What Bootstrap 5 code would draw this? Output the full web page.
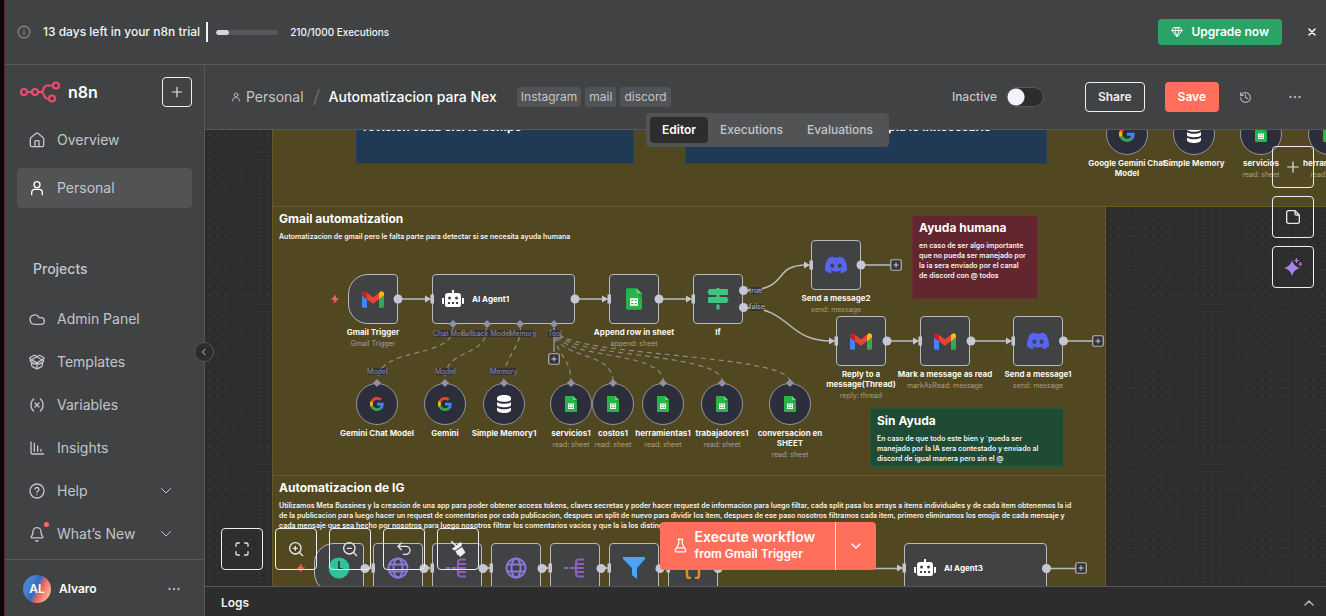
<!DOCTYPE html>
<html lang="en" data-bs-theme="dark">
<head>
<meta charset="utf-8">
<meta name="viewport" content="width=device-width, initial-scale=1">
<title>Automatizacion para Nex - n8n</title>
<link href="https://cdn.jsdelivr.net/npm/bootstrap@5.3.0/dist/css/bootstrap.min.css" rel="stylesheet">
<style>
:root{--panel:#414243;--raised:#525355;--deep:#2d2d2d;--line:#57585a;--muted:#c3c5cc;--bright:#f3f4f8;--primary:#ff6f5c}
body{font-family:Inter,"Liberation Sans",sans-serif;font-size:14px;line-height:20px;background:#08080b;color:var(--muted);overflow:hidden}
button{font-family:inherit}
svg{display:block;flex:none}
.ico{fill:none;stroke:currentColor;stroke-width:2;stroke-linecap:round;stroke-linejoin:round}
.app-shell{margin-left:4px;border-left:1px solid #5a2630;background:var(--panel)}
.trial-bar{height:65px;border-bottom:1px solid var(--line);color:var(--bright)}
.f10{font-size:10px}.f12{font-size:12px}
.brand{font-size:16px}
.caret-bar{width:2px;height:20px;background:#f3f4f8;margin:0 8px 0 6px}
.progress{width:62px;height:5px;--bs-progress-bg:#57585b;--bs-progress-bar-bg:#d3d4dc}
.progress-bar{border-radius:3px}
.btn-up{height:26px;background:#29a366;color:#fff}
.btn-up,.btn-line,.btn-main{border-radius:4px;font-weight:600;font-size:12px;line-height:18px;padding:0 12px}
.side{width:200px;border-right:1px solid var(--line)}
.side-head{height:55px;padding:0 12px 2px 15px}
.btn-sq{border:1px solid #eceef2;border-radius:4px;color:#e6e8ec;padding:0;display:flex;align-items:center;justify-content:center}
.add-btn{width:30px;height:30px}
.side .nav-link{height:40px;padding:0 20px 0 12px;margin:0 12px 8px;border-radius:4px;color:var(--muted);gap:12px;font-size:14px;display:flex;align-items:center}
.side .nav-link.active{background:var(--raised)}
.side .low .nav-link{height:43px;margin-bottom:0}
.news-dot{position:absolute;width:5px;height:5px;right:-4px;top:-4px;border-radius:50%;background:#ff6b5c}
.group-title{margin:auto 0 18px 28px;font-weight:500}
.user-row{height:57px;border-top:1px solid var(--line);padding:2px 24px 0 18px}
.avatar{width:28px;height:28px;border-radius:50%;font-size:12px;font-weight:600;color:#fff;background:linear-gradient(115deg,#4a83cd 25%,#2f6cc4 45%,#f0695a 62%,#fbb9a8 90%)}
.top-head{height:65px;border-bottom:1px solid var(--line);padding:0 25px 0 26px}
.crumb{color:var(--muted);text-decoration:none;margin-left:5px}
.wf-title{color:#fff;font-weight:500;margin-left:9px}
.tag-chip{background:var(--raised);color:var(--muted);border-radius:3px;font-size:12px;line-height:20px;padding:0 4px;text-decoration:none}
.form-switch{min-height:0;gap:9px;font-size:12px;font-weight:500}
.form-switch .form-check-input{width:38px;height:20px;margin:0;border:1px solid #57585a;background:#2d2d2d radial-gradient(circle at 9px 9px,#f2f3fb 8px,transparent 9px)}
.btn-line{height:30px;border:1px solid #eceef2;color:#eef0f4;margin:0 20px 0 41px}
.btn-main{height:30px;background:var(--primary);color:#fff;margin-right:20px}
.btn-plain{padding:0;border:0;color:#b1b3b9}
.more-btn{margin-left:37px}
.collapse-btn{position:absolute;left:-11px;top:212px;width:20px;height:20px;border-radius:50%;background:var(--deep);border:1px solid var(--line);color:var(--muted);padding:0;z-index:6}
.board-wrap{position:relative;min-height:0}
.board{position:absolute;inset:0;overflow:hidden;background:var(--deep)}
/* panned viewport: every child below is placed in world coordinates */
.world{position:absolute;left:-205px;top:-130px;width:1400px;height:700px}
.grid-dots{position:absolute;inset:0;width:100%;height:100%}
.wires{position:absolute;left:0;top:0;overflow:visible}
.note{position:absolute;background:#514720;border:1px solid #665a22;color:#f4f4f4;padding:4px 6px;font-size:7px;line-height:10px;font-weight:600;overflow:hidden;white-space:nowrap}
.note h2{font-size:12px;line-height:16px;font-weight:700;margin:0 0 5px}
.note.blue{background:#203954;border-color:#27435f}
.note.blue.text-end{padding-right:55px}
.note.red{background:#62262e;border-color:#702c34}
.note.green{background:#1f4a33;border-color:#27583d}
.node{position:absolute;width:50px;height:50px;background:#414244;border:1px solid #b9bac0;border-radius:4px;display:flex;align-items:center;justify-content:center}
.node.trig{border-radius:20px 4px 4px 20px}
.node.agent{width:143px;justify-content:flex-start;padding-left:9px;gap:8px;color:#fff;font-size:8px;font-weight:700}
.node.sub{width:42px;height:42px;border-radius:50%;background:#2d2e3c;border-color:#94949b}
.cap{position:absolute;top:100%;left:50%;transform:translateX(-50%);margin-top:4px;width:max-content;text-align:center;color:#f6f6f6;font-size:8px;line-height:10px;font-weight:700}
.cap small{display:block;font-size:7px;line-height:10px;margin-top:2px;color:#a5a295;font-weight:400}
.port{font-size:7px;fill:#8788a6}
.tabs-lay{position:absolute;left:0;right:0;top:-17px;z-index:5;pointer-events:none}
.tab-set{background:var(--raised);border-radius:4px;padding:4px;pointer-events:auto}
.tab-set .nav-link{color:var(--muted);font-size:12px;font-weight:500;line-height:18px;padding:4px 12px;border-radius:4px}
.tab-set .nav-link.active{background:var(--deep);color:#fff;font-weight:600}
.tool{width:42px;height:42px}
.tools-b{position:absolute;left:16px;bottom:16px;gap:12px}
.tools-r{position:absolute;right:12px;top:16px;gap:8px}
.exec-lay{position:absolute;left:0;right:0;bottom:16px;pointer-events:none}
.exec-lay .btn{background:var(--primary);color:#fff;height:48px;border:0;border-radius:4px;pointer-events:auto}
.exec-main{width:176px;padding:0 8px 2px 14px;font-weight:600;font-size:14px;line-height:16px}
.exec-lay .exec-more{width:41px;border-left:1px solid #ffe0da;padding:0}
.logs{height:30px;background:var(--deep);border-top:1px solid var(--line);color:#f0f1f4;padding:3px 11px 0 16px;font-weight:600;font-size:12px}
</style>
</head>
<body>
<svg width="0" height="0" class="position-absolute" aria-hidden="true">
<defs>
<symbol id="gmail" viewBox="52 42 88 66"><path fill="#4285f4" d="M58 108h14V74L52 59v43c0 3.3 2.7 6 6 6"/><path fill="#34a853" d="M120 108h14c3.300 0 6-2.700 6-6V59l-20 15"/><path fill="#fbbc04" d="M120 48v26l20-15v-8c0-7.400-8.500-11.600-14.400-7.200"/><path fill="#ea4335" d="M72 74V48l24 18 24-18v26L96 92"/><path fill="#c5221f" d="M52 51v8l20 15V48l-5.600-4.200c-5.900-4.400-14.400-.2-14.400 7.200"/></symbol>
<symbol id="google" viewBox="0 0 48 48"><path fill="#ea4335" d="M24 9.500c3.540 0 6.710 1.220 9.210 3.600l6.850-6.850C35.900 2.380 30.470 0 24 0 14.620 0 6.510 5.380 2.560 13.220l7.980 6.190C12.430 13.720 17.740 9.500 24 9.500z"/><path fill="#4285f4" d="M46.980 24.550c0-1.570-.15-3.090-.38-4.550H24v9.020h12.940c-.58 2.960-2.260 5.480-4.780 7.180l7.730 6c4.510-4.180 7.090-10.360 7.090-17.650z"/><path fill="#fbbc05" d="M10.530 28.590c-.48-1.450-.76-2.990-.76-4.590s.27-3.140.76-4.590l-7.980-6.190C.92 16.460 0 20.120 0 24c0 3.880.92 7.540 2.560 10.780l7.970-6.190z"/><path fill="#34a853" d="M24 48c6.480 0 11.930-2.130 15.890-5.810l-7.730-6c-2.150 1.450-4.920 2.300-8.160 2.300-6.260 0-11.570-4.220-13.470-9.910l-7.980 6.190C6.510 42.620 14.620 48 24 48z"/></symbol>
<symbol id="sheet" viewBox="0 0 24 32"><path fill="#28b446" d="M2 0h14l8 8v22a2 2 0 0 1-2 2H2a2 2 0 0 1-2-2V2a2 2 0 0 1 2-2z"/><path fill="#6ace7c" d="M16 0l8 8h-8z"/><path fill="#219b3b" d="M17 8h7v7z"/><path fill="#fff" fill-rule="evenodd" d="M6 15h12v11H6zM8 17v2h3v-2zm5 0v2h3v-2zm-5 5v2h3v-2zm5 0v2h3v-2z"/></symbol>
<symbol id="discord" viewBox="0 0 24 24"><path fill="#5865f2" d="M20.317 4.370a19.790 19.790 0 0 0-4.885-1.515.074.074 0 0 0-.079.037c-.211.375-.445.865-.608 1.250-1.845-.276-3.680-.276-5.487 0-.164-.393-.406-.874-.618-1.250a.077.077 0 0 0-.079-.037A19.740 19.740 0 0 0 3.677 4.370a.070.070 0 0 0-.032.028C.533 9.046-.319 13.580.099 18.058a.082.082 0 0 0 .031.056c2.053 1.508 4.041 2.423 5.993 3.029a.078.078 0 0 0 .084-.028c.462-.630.873-1.295 1.226-1.994a.076.076 0 0 0-.042-.106c-.653-.248-1.274-.550-1.872-.892a.077.077 0 0 1-.008-.128c.126-.094.252-.192.372-.291a.074.074 0 0 1 .078-.011c3.928 1.793 8.180 1.793 12.061 0a.074.074 0 0 1 .079.010c.120.099.246.198.373.292a.077.077 0 0 1-.007.128 12.300 12.300 0 0 1-1.873.891.077.077 0 0 0-.041.107c.360.698.772 1.363 1.225 1.993a.076.076 0 0 0 .084.029c1.961-.607 3.950-1.522 6.002-3.029a.077.077 0 0 0 .031-.055c.500-5.177-.838-9.674-3.549-13.660a.061.061 0 0 0-.031-.029zM8.020 15.331c-1.183 0-2.157-1.086-2.157-2.419s.956-2.419 2.157-2.419c1.211 0 2.176 1.095 2.157 2.419 0 1.333-.956 2.419-2.157 2.419zm7.975 0c-1.183 0-2.157-1.086-2.157-2.419s.955-2.419 2.157-2.419c1.211 0 2.176 1.095 2.157 2.419 0 1.333-.946 2.419-2.157 2.419z"/></symbol>
<symbol id="db" viewBox="0 0 16 18"><g fill="#fff"><path d="M1 3c0-4 14-4 14 0v1.500c0 3-14 3-14 0z"/><path d="M1 7c2 2.400 12 2.400 14 0v3c0 3-14 3-14 0z"/><path d="M1 12.500c2 2.400 12 2.400 14 0v2.500c0 4-14 4-14 0z"/></g></symbol>
<symbol id="robot" viewBox="0 0 22 18"><g fill="#fff"><path d="M10 0h2v4h-2zM0 8h2v6H1a1 1 0 0 1-1-1zM20 8h2v5a1 1 0 0 1-1 1h-1z"/><path fill-rule="evenodd" d="M6 3h10a3 3 0 0 1 3 3v9a2 2 0 0 1-2 2H5a2 2 0 0 1-2-2V6a3 3 0 0 1 3-3zm1.500 3.500a1.500 1.500 0 1 0 0 3 1.500 1.500 0 0 0 0-3zm7 0a1.500 1.500 0 1 0 0 3 1.500 1.500 0 0 0 0-3zM6 12v2h2v-2zm4 0v2h2v-2zm4 0v2h2v-2z"/></g></symbol>
<symbol id="signs" viewBox="0 0 22 22"><path fill="#3fc380" d="M9.500 0h3v1H20a1 1 0 0 1 1 1v4a1 1 0 0 1-1 1H2L.5 4 2 1h7.500zM9.500 7h3v2H20l1.500 3L20 15H2a1 1 0 0 1-1-1v-4a1 1 0 0 1 1-1h7.500zM9.500 16.500h3v5h-3z"/></symbol>
<symbol id="globe" viewBox="0 0 22 22"><g fill="none" stroke="#8878dd" stroke-width="2"><circle cx="11" cy="11" r="9.500"/><ellipse cx="11" cy="11" rx="4.500" ry="9.500"/><path d="M2 7.500h18M2 14.500h18"/></g></symbol>
<symbol id="split" viewBox="0 0 22 20"><g fill="none" stroke="#8f5fc2" stroke-width="2"><path d="M0 10h4M5.500 10H12M20 1.500h-5q-3 0-3 3v11q0 3 3 3h5M12 6h8M12 10h8M12 14h8"/></g></symbol>
<symbol id="funnel" viewBox="0 0 22 22"><path fill="#4ba5f7" d="M0 0h22v2l-8 9v11l-5-4v-7L0 2z"/></symbol>
<symbol id="clock" viewBox="0 0 22 22"><circle cx="11" cy="11" r="10.500" fill="#2fc29b"/><path d="M11 4v8h4" fill="none" stroke="#414244" stroke-width="2"/></symbol>
<symbol id="braces" viewBox="0 0 18 22"><path fill="none" stroke="#e88b26" stroke-width="2.500" d="M7 1H5Q3 1 3 4v4q0 3-2 3 2 0 2 3v4q0 3 2 3h2M11 1h2q2 0 2 3v4q0 3 2 3-2 0-2 3v4q0 3-2 3h-2"/></symbol>
<symbol id="bolt" viewBox="0 0 24 24"><path fill="#f2635a" d="M14 1 2 14h8l-1 9 13-13h-8z"/></symbol>
<symbol id="person" viewBox="0 0 24 24"><circle cx="12" cy="7" r="4.500"/><path d="M4 22v-3a5 5 0 0 1 5-5h6a5 5 0 0 1 5 5v3"/></symbol>
<symbol id="plusbox" viewBox="0 0 12 12"><rect x=".75" y=".75" width="10.500" height="10.500" rx="1.500" fill="#333437" stroke="#b5b7bf" stroke-width="1.200"/><path d="M6 3.500v5M3.500 6h5" stroke="#c8cad2" stroke-width="1"/></symbol>
<symbol id="inport" viewBox="0 0 9 10"><path fill="#c5c7d4" d="M0 1.500 6 5 0 8.500zM5.500.5H9v9H5.500z"/></symbol>
<symbol id="diam" viewBox="0 0 8 8"><path fill="#9091a8" d="M4 0l4 4-4 4-4-4z"/></symbol>
</defs>
</svg>

<div class="app-shell vh-100 d-flex flex-column">
  <header class="trial-bar d-flex align-items-center flex-shrink-0 ps-2 pe-2">
    <svg class="ico ms-1 me-2" style="color:#8b8c8f" width="14" height="14" viewBox="0 0 24 24"><circle cx="12" cy="12" r="10"/><path d="M12 16v-5M12 8v0"/></svg>
    <span class="f12 fw-medium ms-1">13 days left in your n8n trial</span>
    <span class="caret-bar"></span>
    <div class="progress" role="progressbar" aria-label="Executions used" aria-valuenow="21" aria-valuemin="0" aria-valuemax="100"><div class="progress-bar" style="width:21%"></div></div>
    <span class="f10 fw-medium ms-2 ps-1">210/1000 Executions</span>
    <button type="button" class="btn btn-up ms-auto d-flex align-items-center justify-content-center gap-1"><svg class="ico me-1" width="12" height="12" viewBox="0 0 24 24"><path d="M6 3h12l4 6-10 13L2 9zM2 9h20M11 3 8 9l4 13 4-13-3-6"/></svg>Upgrade now</button>
    <button type="button" class="btn border-0 text-white p-0 ms-4" aria-label="Close"><svg class="ico" width="12" height="12" viewBox="0 0 24 24"><path d="M18 6 6 18M6 6l12 12" stroke-width="3"/></svg></button>
  </header>

  <div class="d-flex flex-grow-1" style="min-height:0">
    <aside class="side d-flex flex-column flex-shrink-0">
      <div class="side-head d-flex align-items-center">
        <svg width="40" height="22" viewBox="0 0 40 22" fill="none" stroke="#ea4b71" stroke-width="2.200"><circle cx="4" cy="11" r="3"/><circle cx="15" cy="11" r="3"/><circle cx="36" cy="4.500" r="3"/><circle cx="32" cy="17.500" r="3"/><path d="M7 11h5M18 11h3c3 0 2-6.500 6-6.500h6M21 11c4 0 2 6.500 6 6.500h2"/></svg>
        <span class="brand fw-semibold text-white ms-2">n8n</span>
        <button type="button" class="btn btn-sq add-btn ms-auto" aria-label="Add"><svg class="ico" width="14" height="14" viewBox="0 0 24 24"><path d="M12 4v16M4 12h16"/></svg></button>
      </div>
      <nav class="nav flex-column flex-nowrap">
        <a class="nav-link" href="#"><svg class="ico" width="16" height="16" viewBox="0 0 24 24"><path d="M15 22v-8a1 1 0 0 0-1-1h-4a1 1 0 0 0-1 1v8"/><path d="M2 10a2 2 0 0 1 .7-1.500l8-6.500a2 2 0 0 1 2.600 0l8 6.500A2 2 0 0 1 22 10v10a2 2 0 0 1-2 2H4a2 2 0 0 1-2-2z"/></svg>Overview</a>
        <a class="nav-link active" href="#"><svg class="ico text-white" width="16" height="16"><use href="#person"/></svg>Personal</a>
      </nav>
      <div class="group-title">Projects</div>
      <nav class="nav flex-column flex-nowrap low pb-1">
        <a class="nav-link" href="#"><svg class="ico" width="16" height="16" viewBox="0 0 24 24"><path d="M18 20H8.500A7 7 0 1 1 15 10h3a5 5 0 0 1 0 10z"/></svg>Admin Panel</a>
        <a class="nav-link" href="#"><svg class="ico" width="16" height="16" viewBox="0 0 24 24"><path d="M12 22v-9M15 2.200a1.700 1.700 0 0 1 1.600 0l5 3a1.400 1.400 0 0 1 0 2.600L9.400 14.800a1.700 1.700 0 0 1-1.600 0l-5-3a1.400 1.400 0 0 1 0-2.600z"/><path d="M20 13v4a2 2 0 0 1-1 1.800l-6 3a2 2 0 0 1-2 0l-6-3A2 2 0 0 1 4 17v-4"/><path d="M21 12.300a1.400 1.400 0 0 0 0-2.600L9 2.200a2 2 0 0 0-2 0l-5 3a1.400 1.400 0 0 0 0 2.600l12.600 7a1.700 1.700 0 0 0 1.600 0z"/></svg>Templates</a>
        <a class="nav-link" href="#"><svg class="ico" width="16" height="16" viewBox="0 0 24 24"><path d="M7 21s-4-3-4-9 4-9 4-9M17 3s4 3 4 9-4 9-4 9M15 9l-6 6M9 9l6 6"/></svg>Variables</a>
        <a class="nav-link" href="#"><svg class="ico" width="16" height="16" viewBox="0 0 24 24"><path d="M3 3v16a2 2 0 0 0 2 2h17M8 17V5M13 17V9M18 17v-3"/></svg>Insights</a>
        <a class="nav-link" href="#"><svg class="ico" width="16" height="16" viewBox="0 0 24 24"><circle cx="12" cy="12" r="10.500"/><path d="M9 9a3 3 0 0 1 5.900 1c0 2-3 2.500-3 4M12 17.500v0"/></svg>Help<svg class="ico ms-auto" width="12" height="12" viewBox="0 0 24 24"><path d="m3 7 9 9 9-9"/></svg></a>
        <a class="nav-link" href="#"><span class="position-relative"><svg class="ico" width="16" height="16" viewBox="0 0 24 24"><path d="M10.300 22a2 2 0 0 0 3.400 0M3.300 16a1 1 0 0 0 .7 1.700h16a1 1 0 0 0 .7-1.700C19.400 14.500 18 13 18 8.500A6 6 0 0 0 6 8.500c0 4.500-1.400 6-2.700 7.500"/></svg><span class="news-dot"></span></span>What’s New<svg class="ico ms-auto" width="12" height="12" viewBox="0 0 24 24"><path d="m3 7 9 9 9-9"/></svg></a>
      </nav>
      <div class="user-row d-flex align-items-center flex-shrink-0">
        <span class="avatar d-flex align-items-center justify-content-center">AL</span>
        <span class="f12 fw-semibold text-white ms-2">Alvaro</span>
        <button type="button" class="btn btn-plain ms-auto" aria-label="User menu"><svg width="12" height="12" viewBox="0 0 12 12" fill="currentColor"><circle cx="1.500" cy="6" r="1.200"/><circle cx="6" cy="6" r="1.200"/><circle cx="10.500" cy="6" r="1.200"/></svg></button>
      </div>
    </aside>

    <main class="d-flex flex-column flex-grow-1" style="min-width:0">
      <div class="top-head d-flex align-items-center flex-shrink-0">
        <svg class="ico" width="10" height="10"><use href="#person"/></svg>
        <a href="#" class="crumb">Personal</a>
        <svg class="ms-2" width="8" height="18" viewBox="0 0 8 18" stroke="#6a6b6e" stroke-width="1.500"><path d="M7 1 2 17"/></svg>
        <span class="wf-title">Automatizacion para Nex</span>
        <div class="d-flex gap-1 ms-3 ps-1"><a class="tag-chip" href="#">Instagram</a><a class="tag-chip" href="#">mail</a><a class="tag-chip" href="#">discord</a></div>
        <div class="form-check form-switch d-flex align-items-center p-0 m-0 ms-auto">
          <label for="act">Inactive</label><input class="form-check-input" type="checkbox" role="switch" id="act">
        </div>
        <button type="button" class="btn btn-line">Share</button>
        <button type="button" class="btn btn-main">Save</button>
        <button type="button" class="btn btn-plain" aria-label="History"><svg class="ico" width="13" height="13" viewBox="0 0 24 24"><path d="M3 12a9 9 0 1 0 9-9 9.800 9.800 0 0 0-6.700 2.700L3 8M3 3v5h5M12 7v5l4 2"/></svg></button>
        <button type="button" class="btn btn-plain more-btn" aria-label="More"><svg width="12" height="12" viewBox="0 0 12 12" fill="currentColor"><circle cx="1.500" cy="6" r="1.200"/><circle cx="6" cy="6" r="1.200"/><circle cx="10.500" cy="6" r="1.200"/></svg></button>
      </div>

      <div class="board-wrap flex-grow-1">
        <div class="tabs-lay d-flex justify-content-center ps-1"><nav class="tab-set nav"><a class="nav-link active" href="#">Editor</a><a class="nav-link" href="#">Executions</a><a class="nav-link" href="#">Evaluations</a></nav></div>
        <button type="button" class="btn collapse-btn d-flex align-items-center justify-content-center" aria-label="Collapse sidebar"><svg class="ico" width="8" height="8" viewBox="0 0 24 24"><path d="m15 4-8 8 8 8" stroke-width="3"/></svg></button>

        <div class="board">
          <svg class="grid-dots"><defs><pattern id="dots" x="3" y="4" width="8.430" height="8.430" patternUnits="userSpaceOnUse"><circle cx="1" cy="1" r=".6" fill="#5c5c5c"/></pattern></defs><rect width="100%" height="100%" fill="url(#dots)"/></svg>
          <div class="world">
            <section class="note" style="left:272px;top:60px;width:1120px;height:147px"></section>
            <section class="note blue" style="left:356px;top:114px;width:278px;height:50px"><h2>revision cada cierto tiempo</h2></section>
            <section class="note blue text-end" style="left:685px;top:114px;width:362px;height:50px"><h2>limpia lo innecesario</h2></section>
            <section class="note" style="left:272px;top:206px;width:834px;height:270px"><h2>Gmail automatization</h2>Automatizacion de gmail pero le falta parte para detectar si se necesita ayuda humana</section>
            <section class="note" style="left:272px;top:475px;width:834px;height:160px"><h2>Automatizacion de IG</h2>Utilizamos Meta Bussines y la creacion de una app para poder obtener access tokens, claves secretas y poder hacer request de informacion para luego filtar, cada split pasa los arrays a items individuales y de cada item obtenemos la id<br>de la publicacion para luego hacer un request de comentarios por cada publicacion, despues un split de nuevo para dividir los item, despues de ese paso nosotros filtramos cada item, primero eliminamos los emojis de cada mensaje y<br>cada mensaje que sea hecho por nosotros para luego nosotros filtrar los comentarios vacios y que la ia los distinga</section>
            <section class="note red" style="left:912px;top:215px;width:126px;height:84px"><h2>Ayuda humana</h2>en caso de ser algo importante<br>que no pueda ser manejado por<br>la ia sera enviado por el canal<br>de discord con @ todos</section>
            <section class="note green" style="left:870px;top:408px;width:194px;height:59px"><h2>Sin Ayuda</h2>En caso de que todo este bien y ´pueda ser<br>manejado por la IA sera contestado y enviado al<br>discord de igual manera pero sin el @</section>

            <svg class="wires" width="1400" height="700" fill="none" stroke="#b9bac0" stroke-width="1.500">
              <path d="M398 299h32M575 299h32M659 299h32M743 290.500C792 290.500 770 265 807 265M743 307.500C792 307.500 785 341 832 341M861 265h30M887 341h30M971 341h39M1063 341h30M718 568.500h182M1047 568.500h29"/>
              <g stroke="#8d8b86" stroke-width="1.200" stroke-dasharray="5 4"><path d="M453 328C453 360 377 345 377 382M486.500 328C486.500 360 444.500 345 444.500 382M520.500 328C520.500 350 503.500 355 503.500 382M554 328C554 356 571 355 571 382M554 328C554 362 613 348 613 382M554 328C554 362 663.500 348 663.500 382M554 328C554 360 722.500 350 722.500 382M554 328C554 358 790 352 790 382"/></g>
              <path d="M554 328v24" stroke="#8d8b9a"/>
            </svg>

            <div class="node sub" style="left:1106px;top:113px"><svg width="16" height="16"><use href="#google"/></svg><div class="cap">Google Gemini Chat<br>Model</div></div>
            <div class="node sub" style="left:1173px;top:113px"><svg width="16" height="18"><use href="#db"/></svg><div class="cap">Simple Memory</div></div>
            <div class="node sub" style="left:1240px;top:113px"><svg width="12" height="16"><use href="#sheet"/></svg><div class="cap">servicios<small>read: sheet</small></div></div>
            <div class="node sub" style="left:1308px;top:113px"><svg width="12" height="16"><use href="#sheet"/></svg><div class="cap">herramientas<small>read: sheet</small></div></div>

            <svg class="position-absolute" style="left:330px;top:294px" width="10" height="10"><use href="#bolt"/></svg>
            <div class="node trig" style="left:348px;top:274px"><svg width="22" height="17"><use href="#gmail"/></svg><div class="cap">Gmail Trigger<small>Gmail Trigger</small></div></div>
            <div class="node agent" style="left:432px;top:274px"><svg width="22" height="18"><use href="#robot"/></svg>AI Agent1</div>
            <div class="node" style="left:609px;top:274px"><svg width="16" height="22"><use href="#sheet"/></svg><div class="cap">Append row in sheet<small>append: sheet</small></div></div>
            <div class="node" style="left:693px;top:274px"><svg width="22" height="22"><use href="#signs"/></svg><div class="cap">If</div></div>
            <div class="node" style="left:811px;top:240px"><svg width="22" height="22"><use href="#discord"/></svg><div class="cap">Send a message2<small>send: message</small></div></div>
            <div class="node" style="left:836px;top:316px"><svg width="22" height="17"><use href="#gmail"/></svg><div class="cap">Reply to a<br>message(Thread)<small>reply: thread</small></div></div>
            <div class="node" style="left:920px;top:316px"><svg width="22" height="17"><use href="#gmail"/></svg><div class="cap">Mark a message as read<small>markAsRead: message</small></div></div>
            <div class="node" style="left:1013px;top:316px"><svg width="22" height="22"><use href="#discord"/></svg><div class="cap">Send a message1<small>send: message</small></div></div>

            <div class="node sub" style="left:356px;top:383px"><svg width="14" height="14"><use href="#google"/></svg><div class="cap">Gemini Chat Model</div></div>
            <div class="node sub" style="left:424px;top:383px"><svg width="14" height="14"><use href="#google"/></svg><div class="cap">Gemini</div></div>
            <div class="node sub" style="left:483px;top:383px"><svg width="16" height="18"><use href="#db"/></svg><div class="cap">Simple Memory1</div></div>
            <div class="node sub" style="left:550px;top:383px"><svg width="12" height="16"><use href="#sheet"/></svg><div class="cap">servicios1<small>read: sheet</small></div></div>
            <div class="node sub" style="left:592px;top:383px"><svg width="12" height="16"><use href="#sheet"/></svg><div class="cap">costos1<small>read: sheet</small></div></div>
            <div class="node sub" style="left:642px;top:383px"><svg width="12" height="16"><use href="#sheet"/></svg><div class="cap">herramientas1<small>read: sheet</small></div></div>
            <div class="node sub" style="left:701px;top:383px"><svg width="12" height="16"><use href="#sheet"/></svg><div class="cap">trabajadores1<small>read: sheet</small></div></div>
            <div class="node sub" style="left:769px;top:383px"><svg width="12" height="16"><use href="#sheet"/></svg><div class="cap">conversacion en<br>SHEET<small>read: sheet</small></div></div>

            <svg class="position-absolute" style="left:296px;top:563px" width="10" height="10"><use href="#bolt"/></svg>
            <div class="node trig" style="left:314px;top:543px"><svg width="22" height="22"><use href="#clock"/></svg></div>
            <div class="node" style="left:373px;top:543px"><svg width="22" height="22"><use href="#globe"/></svg></div>
            <div class="node" style="left:432px;top:543px"><svg width="22" height="20"><use href="#split"/></svg></div>
            <div class="node" style="left:491px;top:543px"><svg width="22" height="22"><use href="#globe"/></svg></div>
            <div class="node" style="left:550px;top:543px"><svg width="22" height="20"><use href="#split"/></svg></div>
            <div class="node" style="left:609px;top:543px"><svg width="22" height="22"><use href="#funnel"/></svg></div>
            <div class="node" style="left:668px;top:543px"><svg width="18" height="22"><use href="#braces"/></svg></div>
            <div class="node agent" style="left:904px;top:543px"><svg width="22" height="18"><use href="#robot"/></svg>AI Agent3</div>

            <svg class="wires" width="1400" height="700">
              <g fill="#c5c7d4"><circle cx="398" cy="299" r="4.500"/><circle cx="575" cy="299" r="4.500"/><circle cx="659" cy="299" r="4.500"/><circle cx="743.500" cy="290.500" r="4.500"/><circle cx="743.500" cy="307.500" r="4.500"/><circle cx="861" cy="265" r="4.500"/><circle cx="887" cy="341" r="4.500"/><circle cx="971" cy="341" r="4.500"/><circle cx="1063.500" cy="341" r="4.500"/><circle cx="365" cy="568.500" r="4.500"/><circle cx="424" cy="568.500" r="4.500"/><circle cx="483" cy="568.500" r="4.500"/><circle cx="542" cy="568.500" r="4.500"/><circle cx="601" cy="568.500" r="4.500"/><circle cx="660" cy="568.500" r="4.500"/><circle cx="718" cy="568.500" r="4.500"/><circle cx="1046.500" cy="568.500" r="4.500"/></g>
              <g>
                <use href="#inport" x="425" y="294" width="9" height="10"/><use href="#inport" x="602" y="294" width="9" height="10"/><use href="#inport" x="686" y="294" width="9" height="10"/><use href="#inport" x="804" y="260" width="9" height="10"/><use href="#inport" x="829" y="336" width="9" height="10"/><use href="#inport" x="913" y="336" width="9" height="10"/><use href="#inport" x="1006" y="336" width="9" height="10"/><use href="#inport" x="366" y="563" width="9" height="10"/><use href="#inport" x="425" y="563" width="9" height="10"/><use href="#inport" x="484" y="563" width="9" height="10"/><use href="#inport" x="543" y="563" width="9" height="10"/><use href="#inport" x="602" y="563" width="9" height="10"/><use href="#inport" x="661" y="563" width="9" height="10"/><use href="#inport" x="897" y="563" width="9" height="10"/>
                <use href="#plusbox" x="890" y="259" width="12" height="12"/><use href="#plusbox" x="1092" y="335" width="12" height="12"/><use href="#plusbox" x="1075" y="562" width="12" height="12"/><use href="#plusbox" x="548" y="353" width="12" height="12"/>
                <use href="#diam" x="449" y="320" width="8" height="8"/><use href="#diam" x="483" y="320" width="8" height="8"/><use href="#diam" x="516" y="320" width="8" height="8"/><use href="#diam" x="550" y="320" width="8" height="8"/>
                <use href="#diam" x="373" y="379" width="8" height="8"/><use href="#diam" x="441" y="379" width="8" height="8"/><use href="#diam" x="500" y="379" width="8" height="8"/><use href="#diam" x="567" y="379" width="8" height="8"/><use href="#diam" x="609" y="379" width="8" height="8"/><use href="#diam" x="659" y="379" width="8" height="8"/><use href="#diam" x="718" y="379" width="8" height="8"/><use href="#diam" x="786" y="379" width="8" height="8"/>
              </g>
              <g fill="#2f3038" fill-opacity=".85"><path d="M434 330h28v7h-28zM463 330h44v7h-44zM508 330h25v7h-25zM548 330h12v7h-12zM368 368h18v7h-18zM435 368h18v7h-18zM491 368h25v7h-25zM750 287h12v7h-12zM750 304h14v7h-14z"/></g>
              <g class="port"><text x="433" y="336">Chat Mod</text><text x="461" y="336">Fallback Model</text><text x="509" y="336">Memory</text><text x="548" y="336">Tool</text><text x="367" y="374">Model</text><text x="435" y="374">Model</text><text x="490" y="374">Memory</text><g fill="#b9bac4"><text x="749" y="293">true</text><text x="749" y="309">false</text></g></g>
            </svg>
          </div>
        </div>

        <div class="tools-b d-flex">
          <button type="button" class="btn btn-sq tool" aria-label="Fit view"><svg class="ico" width="16" height="16" viewBox="0 0 24 24"><path d="M8 3H5a2 2 0 0 0-2 2v3M21 8V5a2 2 0 0 0-2-2h-3M3 16v3a2 2 0 0 0 2 2h3M16 21h3a2 2 0 0 0 2-2v-3"/></svg></button>
          <button type="button" class="btn btn-sq tool" aria-label="Zoom in"><svg class="ico" width="16" height="16" viewBox="0 0 24 24"><circle cx="11" cy="11" r="8.500"/><path d="m22 22-5-5M11 8v6M8 11h6"/></svg></button>
          <button type="button" class="btn btn-sq tool" aria-label="Zoom out"><svg class="ico" width="16" height="16" viewBox="0 0 24 24"><circle cx="11" cy="11" r="8.500"/><path d="m22 22-5-5M8 11h6"/></svg></button>
          <button type="button" class="btn btn-sq tool" aria-label="Undo"><svg class="ico" width="16" height="16" viewBox="0 0 24 24"><path d="M8 13 3 8l5-5M3 8h12a6 6 0 0 1 0 12h-4"/></svg></button>
          <button type="button" class="btn btn-sq tool" aria-label="Tidy up"><svg width="16" height="16" viewBox="0 0 16 16" fill="#eceef2"><path d="M1 0 2 0 6.500 4.200 10.500 1 12 2.500 11.500 5 5 9.500 2.500 8.500 2.200 7.500 5.300 5.200 1 1zM5.500 10.300 12 6l3.500 5.500-5.500 4.500-1.300-2-.9.600z"/></svg></button>
        </div>
        <div class="tools-r d-flex flex-column">
          <button type="button" class="btn btn-sq tool" aria-label="Add node"><svg class="ico" width="14" height="14" viewBox="0 0 24 24"><path d="M12 3v18M3 12h18"/></svg></button>
          <button type="button" class="btn btn-sq tool" aria-label="Add note"><svg class="ico" width="16" height="16" viewBox="0 0 24 24"><path d="M15 2.500H5A2.500 2.500 0 0 0 2.500 5v14A2.500 2.500 0 0 0 5 21.500h14a2.500 2.500 0 0 0 2.500-2.500V9zM15 3v4a2 2 0 0 0 2 2h4"/></svg></button>
          <button type="button" class="btn btn-sq tool" aria-label="Assistant"><svg width="18" height="18" viewBox="0 0 18 18"><path fill="#a684ee" d="M8 2q1.500 6.500 8 8-6.500 1.500-8 8-1.500-6.500-8-8 6.500-1.500 8-8z"/><path d="M12.500 0v5M10 2.500h5M16.500 4v4M14.500 6h4" stroke="#c273c4" stroke-width="1.200"/></svg></button>
        </div>
        <div class="exec-lay d-flex justify-content-center ps-1">
          <div class="btn-group">
            <button type="button" class="btn exec-main d-flex align-items-center text-start"><svg class="ico me-2" width="13" height="15" viewBox="0 0 22 26"><path d="M7 2h8M8 2v8L2 21q-1 3 2 3h14q3 0 2-3l-6-11V2M5 17h12"/></svg><span>Execute workflow<br><span class="f12">from Gmail Trigger</span></span></button>
            <button type="button" class="btn exec-more d-flex align-items-center justify-content-center" aria-label="Choose trigger"><svg class="ico" width="12" height="12" viewBox="0 0 24 24"><path d="m4 8 8 8 8-8" stroke-width="3"/></svg></button>
          </div>
        </div>
      </div>
      <footer class="logs d-flex align-items-center justify-content-between flex-shrink-0">Logs<button type="button" class="btn btn-plain" aria-label="Open logs"><svg class="ico" width="12" height="12" viewBox="0 0 24 24"><path d="m4 16 8-8 8 8" stroke-width="3"/></svg></button></footer>
    </main>
  </div>
</div>
<script src="https://cdn.jsdelivr.net/npm/bootstrap@5.3.0/dist/js/bootstrap.bundle.min.js"></script>
</body>
</html>
